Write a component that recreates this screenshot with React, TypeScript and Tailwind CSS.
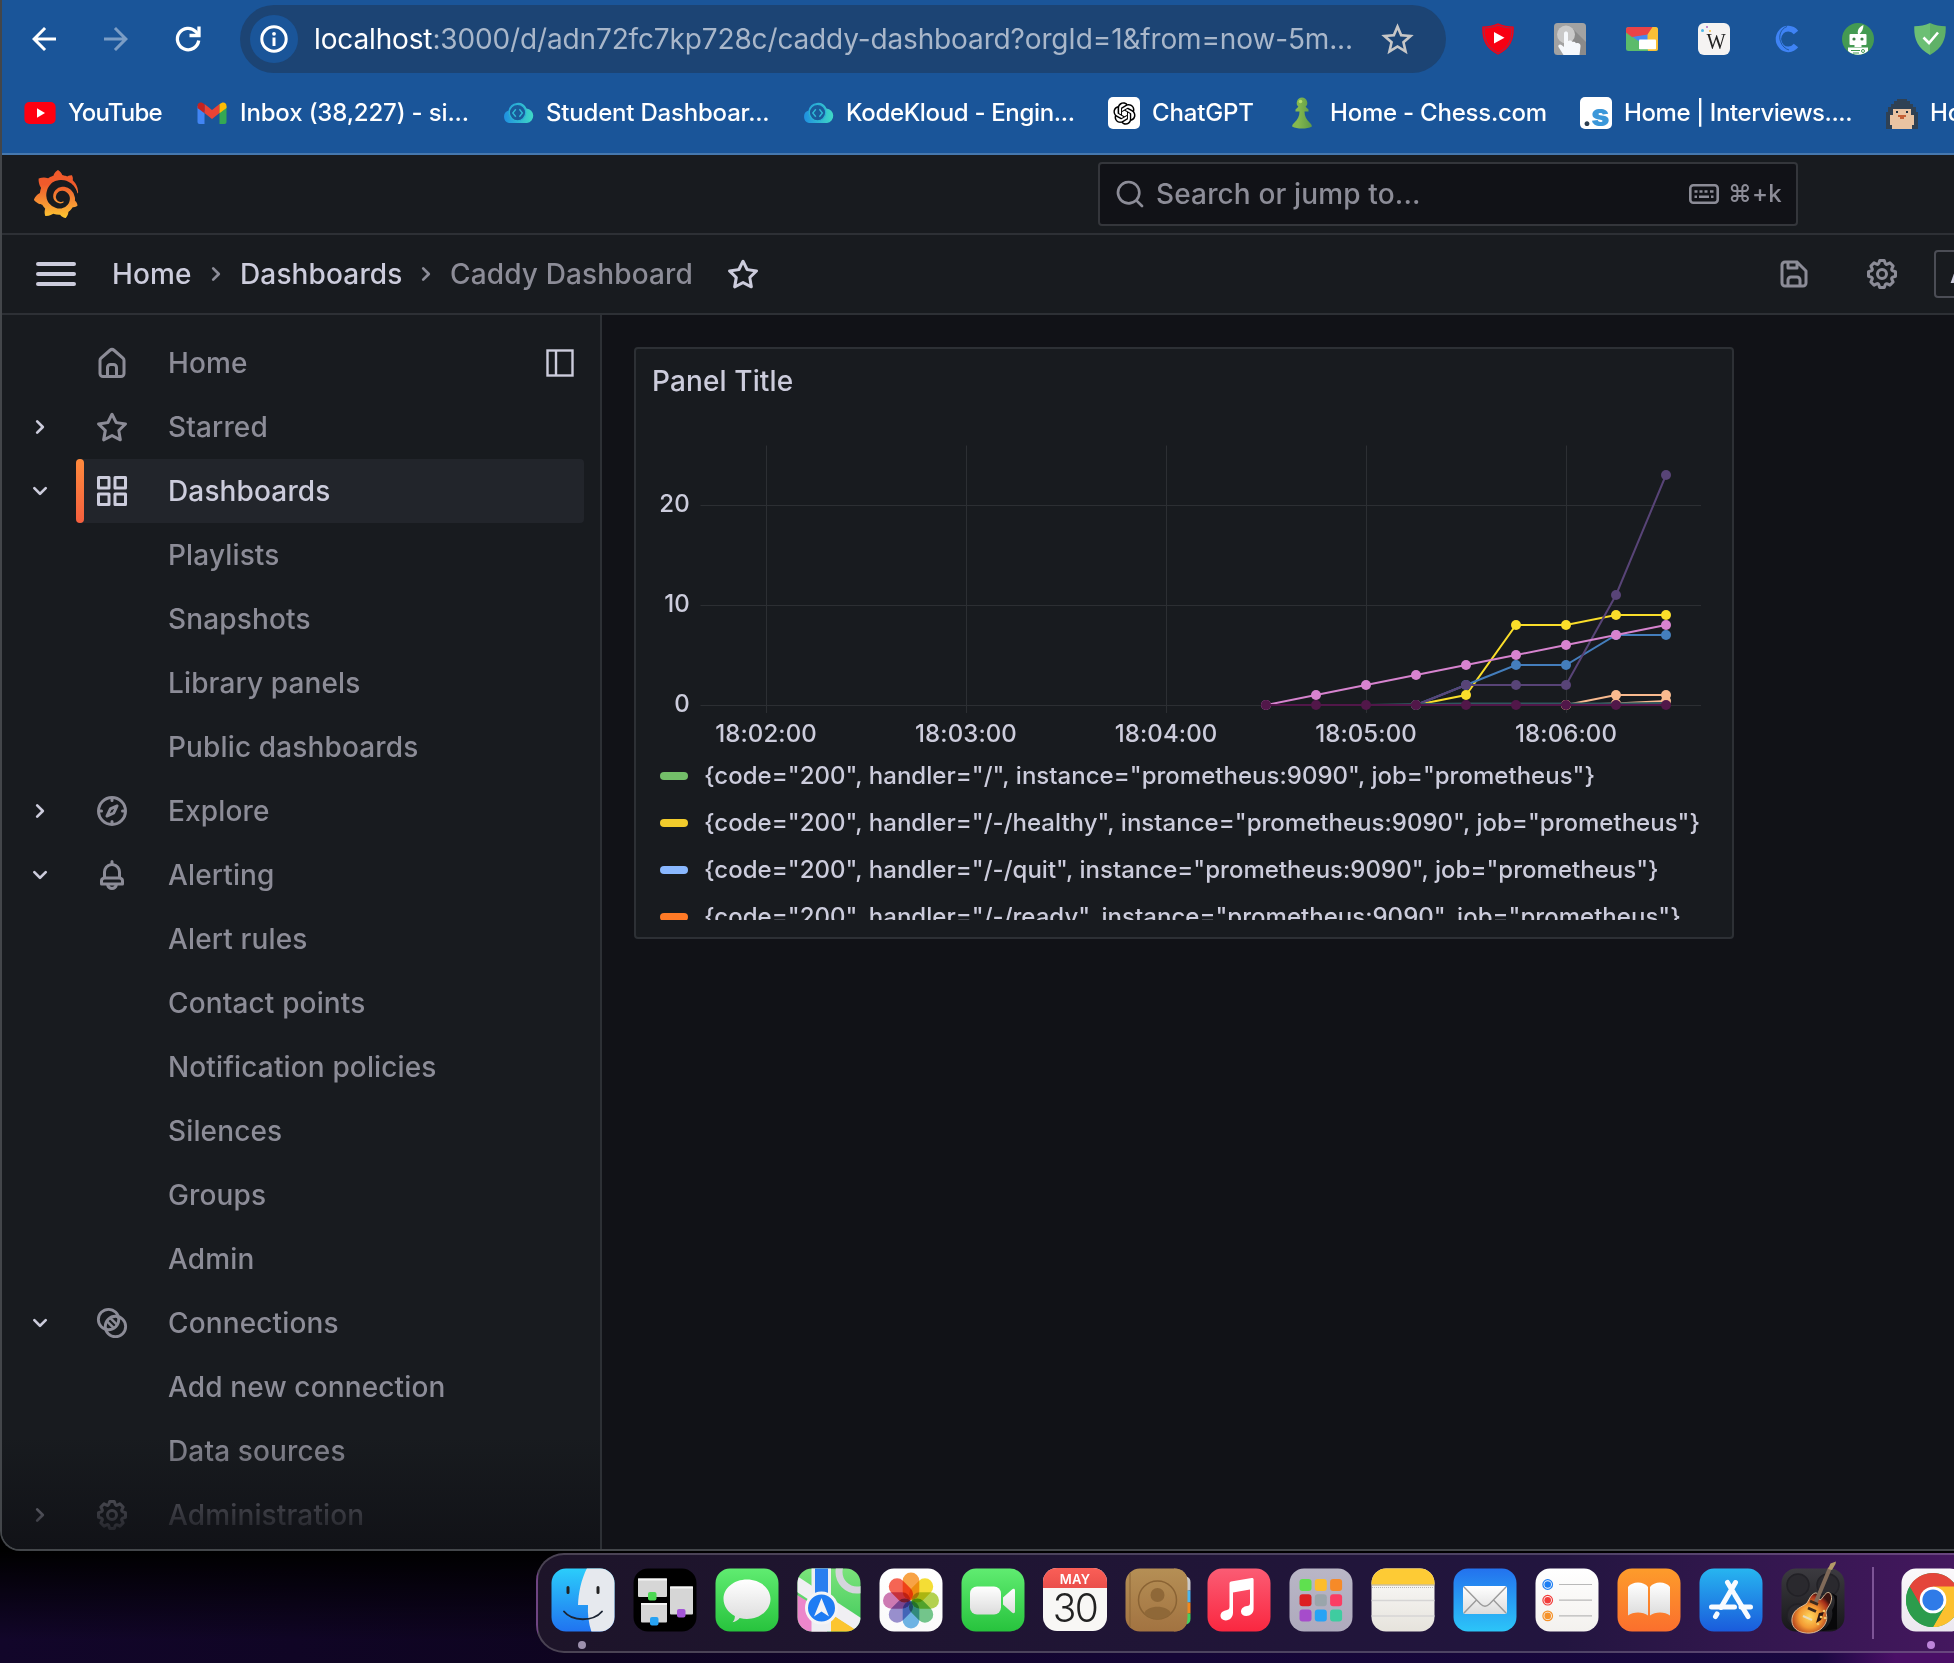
import React from "react";
import { MdArrowBack, MdArrowForward, MdStarBorder } from "react-icons/md";
import { SiGrafana } from "react-icons/si";
import { RiOpenaiFill } from "react-icons/ri";

const ICONS = {
  right:
    "M14.83,11.29,10.59,7.05a1,1,0,0,0-1.42,0,1,1,0,0,0,0,1.41L12.71,12,9.17,15.54a1,1,0,0,0,0,1.41,1,1,0,0,0,.71.29,1,1,0,0,0,.71-.29l4.24-4.24A1,1,0,0,0,14.83,11.29Z",
  down: "M17,9.17a1,1,0,0,0-1.41,0L12,12.71,8.46,9.17a1,1,0,0,0-1.41,0,1,1,0,0,0,0,1.42l4.24,4.24a1,1,0,0,0,1.42,0L17,10.59A1,1,0,0,0,17,9.17Z",
  home: "M20,8h0L14,2.74a3,3,0,0,0-4,0L4,8a3,3,0,0,0-1,2.26V19a3,3,0,0,0,3,3H18a3,3,0,0,0,3-3V10.25A3,3,0,0,0,20,8ZM14,20H10V15a1,1,0,0,1,1-1h2a1,1,0,0,1,1,1Zm5-1a1,1,0,0,1-1,1H16V15a3,3,0,0,0-3-3H11a3,3,0,0,0-3,3v5H6a1,1,0,0,1-1-1V10.25a1,1,0,0,1,.34-.75l6-5.25a1,1,0,0,1,1.32,0l6,5.25a1,1,0,0,1,.34.75Z",
  star: "M22,9.67A1,1,0,0,0,21.14,9l-5.69-.83L12.9,3a1,1,0,0,0-1.8,0L8.55,8.16,2.86,9a1,1,0,0,0-.81.68,1,1,0,0,0,.25,1l4.13,4-1,5.68A1,1,0,0,0,6.9,21.44L12,18.77l5.1,2.67a.93.93,0,0,0,.46.12,1,1,0,0,0,.59-.19,1,1,0,0,0,.4-1l-1-5.68,4.13-4A1,1,0,0,0,22,9.67Zm-6.15,4a1,1,0,0,0-.29.88l.72,4.2-3.76-2a1.06,1.06,0,0,0-.94,0l-3.76,2,.72-4.2a1,1,0,0,0-.29-.88l-3-3,4.21-.61a1,1,0,0,0,.76-.55L12,5.7l1.88,3.82a1,1,0,0,0,.76.55l4.21.61Z",
  apps: "M10,13H3a1,1,0,0,0-1,1v7a1,1,0,0,0,1,1h7a1,1,0,0,0,1-1V14A1,1,0,0,0,10,13ZM9,20H4V15H9ZM21,2H14a1,1,0,0,0-1,1v7a1,1,0,0,0,1,1h7a1,1,0,0,0,1-1V3A1,1,0,0,0,21,2ZM20,9H15V4h5Zm1,4H14a1,1,0,0,0-1,1v7a1,1,0,0,0,1,1h7a1,1,0,0,0,1-1V14A1,1,0,0,0,21,13Zm-1,7H15V15h5ZM10,2H3A1,1,0,0,0,2,3v7a1,1,0,0,0,1,1h7a1,1,0,0,0,1-1V3A1,1,0,0,0,10,2ZM9,9H4V4H9Z",
  bell: "M18,13.18V10a6,6,0,0,0-5-5.91V3a1,1,0,0,0-2,0V4.09A6,6,0,0,0,6,10v3.18A3,3,0,0,0,4,16v2a1,1,0,0,0,1,1H8.14a4,4,0,0,0,7.72,0H19a1,1,0,0,0,1-1V16A3,3,0,0,0,18,13.18ZM8,10a4,4,0,0,1,8,0v3H8Zm4,10a2,2,0,0,1-1.72-1h3.44A2,2,0,0,1,12,20Zm6-3H6V16a1,1,0,0,1,1-1H17a1,1,0,0,1,1,1Z",
  cog: "M21.32,9.55l-1.89-.63.89-1.78A1,1,0,0,0,20.13,6L18,3.87a1,1,0,0,0-1.15-.19l-1.78.89-.63-1.89A1,1,0,0,0,13.5,2h-3a1,1,0,0,0-.95.68L8.92,4.57,7.14,3.68A1,1,0,0,0,6,3.87L3.87,6a1,1,0,0,0-.19,1.15l.89,1.78-1.89.63A1,1,0,0,0,2,10.5v3a1,1,0,0,0,.68.95l1.89.63-.89,1.78A1,1,0,0,0,3.87,18L6,20.13a1,1,0,0,0,1.15.19l1.78-.89.63,1.89a1,1,0,0,0,.95.68h3a1,1,0,0,0,.95-.68l.63-1.89,1.78.89A1,1,0,0,0,18,20.13L20.13,18a1,1,0,0,0,.19-1.15l-.89-1.78,1.89-.63A1,1,0,0,0,22,13.5v-3A1,1,0,0,0,21.32,9.55ZM20,12.78l-1.2.4A2,2,0,0,0,17.64,16l.57,1.14-1.1,1.1L16,17.64a2,2,0,0,0-2.79,1.16l-.4,1.2H11.22l-.4-1.2A2,2,0,0,0,8,17.64l-1.14.57-1.1-1.1L6.36,16A2,2,0,0,0,5.2,13.18L4,12.78V11.22l1.2-.4A2,2,0,0,0,6.36,8L5.79,6.89l1.1-1.1L8,6.36A2,2,0,0,0,10.82,5.2l.4-1.2h1.56l.4,1.2A2,2,0,0,0,16,6.36l1.14-.57,1.1,1.1L17.64,8a2,2,0,0,0,1.16,2.79l1.2.4ZM12,8a4,4,0,1,0,4,4A4,4,0,0,0,12,8Zm0,6a2,2,0,1,1,2-2A2,2,0,0,1,12,14Z",
  save: "M20.71,9.29l-6-6a1,1,0,0,0-.32-.21A1.09,1.09,0,0,0,14,3H6A3,3,0,0,0,3,6V18a3,3,0,0,0,3,3H18a3,3,0,0,0,3-3V10A1,1,0,0,0,20.71,9.29ZM9,5h4V7H9Zm6,14H9V16a1,1,0,0,1,1-1h4a1,1,0,0,1,1,1Zm4-1a1,1,0,0,1-1,1H17V16a3,3,0,0,0-3-3H10a3,3,0,0,0-3,3v3H6a1,1,0,0,1-1-1V6A1,1,0,0,1,6,5H7V8A1,1,0,0,0,8,9h6a1,1,0,0,0,1-1V6.41l4,4Z",
  search:
    "M21.71,20.29,18,16.61A9,9,0,1,0,16.61,18l3.68,3.68a1,1,0,0,0,1.42,0A1,1,0,0,0,21.71,20.29ZM11,18a7,7,0,1,1,7-7A7,7,0,0,1,11,18Z",
  bars: "M3,8H21a1,1,0,0,0,0-2H3A1,1,0,0,0,3,8Zm18,8H3a1,1,0,0,0,0,2H21a1,1,0,0,0,0-2Zm0-5H3a1,1,0,0,0,0,2H21a1,1,0,0,0,0-2Z",
};

function Icon({ d, className = "size-9" }: { d: string; className?: string }) {
  return (
    <svg viewBox="0 0 24 24" fill="currentColor" className={`shrink-0 ${className}`}>
      <path d={d} />
    </svg>
  );
}

function CompassIcon() {
  return (
    <svg viewBox="0 0 24 24" className="size-9 shrink-0" fill="none" stroke="currentColor" strokeWidth="2" strokeLinecap="round" strokeLinejoin="round">
      <circle cx="12" cy="12" r="9" />
      <path d="M12 4v1M12 19v1M4 12h1M19 12h1" />
      <path strokeWidth="1.9" d="M15.4 8.6 10.9 10.6 8.6 15.4 13.2 13.3Z" />
    </svg>
  );
}

function ConnectionsIcon() {
  return (
    <svg viewBox="0 0 24 24" className="size-9 shrink-0" fill="none" stroke="currentColor" strokeWidth="1.9" strokeLinecap="round">
      <circle cx="9.7" cy="9.7" r="6.8" />
      <circle cx="14.3" cy="14.3" r="6.8" />
      <path strokeWidth="1.7" d="M11.4 9.2 15 12.8M9.2 11.4 12.8 15" />
    </svg>
  );
}

/* ---------- Browser chrome ---------- */

function YouTubeIcon() {
  return (
    <svg viewBox="0 0 32 32" className="size-8">
      <rect x="0.4" y="5" width="31.2" height="22" rx="5" fill="#ff0010" />
      <path d="M13 11.3v9.4l8-4.7z" fill="#fff" />
    </svg>
  );
}

function GmailIcon() {
  return (
    <svg viewBox="0 0 32 32" className="size-8">
      <path d="M1.5 9v16a2 2 0 0 0 2 2h5V14z" fill="#4285f4" />
      <path d="M30.500 9v16a2 2 0 0 1-2 2h-5V14z" fill="#34a853" />
      <path d="M8.500 7 16 13l7.500-6v9L16 22l-7.500-6z" fill="#ea4335" />
      <path d="M23.500 7.200C27 4 30.500 5.500 30.500 9v2l-7 5.200z" fill="#fbbc04" />
      <path d="M8.500 7.200C5 4 1.500 5.500 1.500 9v2l7 5.200z" fill="#c5221f" />
    </svg>
  );
}

function KodeIcon() {
  return (
    <svg viewBox="0 0 32 32" className="size-8">
      <defs>
        <linearGradient id="kode" x1="0" x2="1">
          <stop offset="0" stopColor="#1f8fe0" />
          <stop offset="1" stopColor="#3fd9c6" />
        </linearGradient>
      </defs>
      <path d="M7 26a6.500 6.500 0 0 1-.5-12.500A9.500 9.500 0 0 1 24.500 11.500 7.300 7.300 0 0 1 25 26z" fill="url(#kode)" />
      <circle cx="15.500" cy="15.600" r="8.200" fill="#1a5a9a" stroke="#2bb3d6" strokeWidth="1.200" />
      <path d="m13.800 12.200-3 3.800 3 3.800M17.400 12.200l3 3.800-3 3.800" fill="none" stroke="#2fb9d6" strokeWidth="1.400" />
    </svg>
  );
}

function GptIcon() {
  return (
    <span className="flex size-8 items-center justify-center rounded-[5px] bg-white">
      <RiOpenaiFill className="size-[27px] text-black" />
    </span>
  );
}

function PawnIcon() {
  return (
    <svg viewBox="0 0 32 32" className="size-8">
      <defs>
        <linearGradient id="pawn" x1="0" x2="1">
          <stop offset="0.3" stopColor="#85b94e" />
          <stop offset="1" stopColor="#5d9948" />
        </linearGradient>
      </defs>
      <path
        d="M16 .5a5.400 5.400 0 0 0-3.600 9.300L9.500 12.500v2h4c0 5-2 8-5 11-2 1.800-2.400 3.200-2.400 4 2.600 1.600 6 2 9.900 2s7.300-.4 9.900-2c0-.8-.4-2.200-2.400-4-3-3-5-6-5-11h4v-2l-2.900-2.700A5.400 5.400 0 0 0 16 .5z"
        fill="url(#pawn)"
      />
      <circle cx="14.500" cy="4.500" r="1.800" fill="#b5dc6c" />
    </svg>
  );
}

function InterviewsIcon() {
  return (
    <span className="flex size-8 items-end justify-center rounded-[5px] bg-white pb-[3px] font-black leading-none">
      <span className="text-[24px] leading-[16px] text-[#2c3e50]">.</span>
      <span className="text-[31px] leading-[22px] text-[#3b97d9]">s</span>
    </span>
  );
}

function PenguinIcon() {
  return (
    <svg viewBox="0 0 32 32" className="size-8" shapeRendering="crispEdges">
      <path d="M11 2h10v2h3v3h3v3h3v5h2v17H0V15h2v-5h3V7h3V4h3z" fill="#2f4154" />
      <path d="M7 12h18v6h3v10h-2v4H6v-4H4V18h3z" fill="#e9c3a2" />
      <path d="M10 14h2v2h-2zM20 14h2v2h-2z" fill="#22303f" />
      <path d="M12 18h8v2h-2v2h-4v-2h-2z" fill="#c55f35" />
    </svg>
  );
}

const BOOKMARKS = [
  { icon: <YouTubeIcon />, text: "YouTube", cls: "w-[172px]", t: "tracking-[-0.85px]" },
  { icon: <GmailIcon />, text: "Inbox (38,227) - si...", cls: "w-[306px]", t: "tracking-[-0.15px]" },
  { icon: <KodeIcon />, text: "Student Dashboar...", cls: "w-[300px]", t: "tracking-[-0.2px]" },
  { icon: <KodeIcon />, text: "KodeKloud - Engin...", cls: "w-[306px]", t: "tracking-[-0.33px]" },
  { icon: <GptIcon />, text: "ChatGPT", cls: "w-[178px]", t: "tracking-[-0.17px]" },
  { icon: <PawnIcon />, text: "Home - Chess.com", cls: "w-[294px]", t: "tracking-[-0.23px]" },
  { icon: <InterviewsIcon />, text: "Home | Interviews....", cls: "w-[306px]", t: "tracking-[-0.43px]" },
  { icon: <PenguinIcon />, text: "Home", cls: "w-[160px]", t: "tracking-[-0.2px]" },
];

function ExtensionIcons() {
  return (
    <div className="flex shrink-0 items-center gap-10">
      <svg viewBox="0 0 32 32" className="size-8">
        <path d="M16 .3C21 2.500 26 3.500 31.700 3.500c.5 12-2.500 21.500-15.700 28.200C2.800 25-.2 15.500.3 3.500 6 3.500 11 2.500 16 .3z" fill="#f80012" />
        <path d="M16 2.200c4.500 1.800 9 2.800 13.800 2.800.3 10.500-2.200 18.500-13.800 25C4.400 23.500 1.900 15.500 2.200 5c4.800 0 9.300-1 13.800-2.800z" fill="none" stroke="#8a3458" strokeWidth="0.900" />
        <path d="M12 9v11.500l10.500-5.700z" fill="#fff" />
      </svg>
      <svg viewBox="0 0 32 32" className="size-8">
        <rect width="32" height="32" rx="3.500" fill="#a2a2a2" />
        <path d="M18 5 32 19v13H20z" fill="#8a8a8a" />
        <circle cx="12" cy="11.500" r="9" fill="#c9c9c9" />
        <path d="M10 10.500c0-2.600 4-2.600 4 0V18l1-.3c1.500-.6 3 0 3.300 1.300 1.600-.8 3.200-.2 3.700 1.300 2.500-.8 5 .5 4.500 3.200L25.500 32H9.500L4.500 24c-1-2 1.500-3.500 3-2l2.500 2z" fill="#f5f8fc" />
      </svg>
      <svg viewBox="0 0 32 32" className="size-8">
        <rect x="0" y="4" width="32" height="24" rx="2.500" fill="#5bbb6b" />
        <path d="M26 4h3.500A2.500 2.500 0 0 1 32 6.500v19a2.500 2.500 0 0 1-2.500 2.500H22l-2-17z" fill="#f9bf36" />
        <path d="M6 13.500 21.500 11v8H14z" fill="#4688f1" />
        <path d="M2.500 4H26.500L21.500 11.500 6 14 0 9.500v-3A2.500 2.500 0 0 1 2.500 4z" fill="#ea4347" />
        <rect x="13" y="16.500" width="17" height="9.800" rx="0.800" fill="#fff" />
      </svg>
      <span className="relative flex size-8 items-center justify-center rounded-[6px] bg-[#f5f3f2] pt-1 font-['Liberation_Serif'] text-[24px] leading-none text-[#222]">
        <span className="scale-x-[.85] pl-1">W</span>
        <span className="absolute left-[3px] top-[6px] size-[3px] rounded-full bg-[#4db8e8]" />
        <span className="absolute left-[8px] top-[3px] size-[2px] rounded-full bg-[#b06ac0]" />
        <span className="absolute left-[11px] top-[7px] size-[2px] rounded-full bg-[#f2c14a]" />
      </span>
      <svg viewBox="0 0 32 32" className="size-8">
        <path d="M26 9.500C22 4.500 15 4.500 11.500 8.500c-4 4.500-4 10.500 0 15C15 27.500 22 27.500 26 22.500" fill="none" stroke="#3f83f5" strokeWidth="5.600" />
        <path d="M17 3.500C10.500 6 8.500 13 10.500 18.500c1.500 4.500 5 7.500 8.500 8.500" fill="none" stroke="#1a5599" strokeWidth="0.900" />
      </svg>
      <svg viewBox="0 0 32 32" className="size-8">
        <circle cx="16" cy="16" r="16" fill="#449a52" />
        <path d="M16 11c-1-4 1-7 5.500-9-.2 4-1.500 7-4 9z" fill="#fff" />
        <rect x="7.500" y="11" width="17" height="11" rx="1" fill="#fff" />
        <circle cx="12" cy="16" r="1.600" fill="#3d7f47" />
        <circle cx="20" cy="16" r="1.600" fill="#3d7f47" />
        <rect x="12.500" y="22" width="7" height="2" fill="#fff" />
        <path d="M6 24.500h20v3.500c-6 5-14 5-20 0z" fill="#fff" />
        <path d="M9 27.500h9M11 30h6" stroke="#449a52" strokeWidth="1" />
        <circle cx="21" cy="28" r="1.500" fill="none" stroke="#449a52" />
      </svg>
      <svg viewBox="0 0 32 32" className="size-8">
        <path d="M16 0C21 2.200 26 3.200 31.700 3.200c.5 12-2.500 21.500-15.700 28.800z" fill="#5fb167" />
        <path d="M16 0C11 2.200 6 3.200.3 3.200-.2 15.200 2.800 24.700 16 32z" fill="#6cbf74" />
        <path d="m9.500 14.500 5.500 5.500 9-10.500" fill="none" stroke="#fff" strokeWidth="2.600" />
      </svg>
    </div>
  );
}

function BrowserChrome() {
  return (
    <header className="flex h-[155px] shrink-0 flex-col border-b-2 border-[#4678ae] bg-[#1a5599] text-white">
      <div className="flex h-[78px] shrink-0 items-center pl-6">
        <MdArrowBack className="size-9 shrink-0" />
        <MdArrowForward className="ml-9 size-9 shrink-0 text-[#7b9dc5]" />
        <svg viewBox="0 0 36 36" className="ml-9 size-9 shrink-0" fill="none" stroke="currentColor" strokeWidth="3.300">
          <path d="M28.700 19.500A10.700 10.700 0 1 1 25.800 10.600L28.500 13.500" />
          <path d="M29 5.500V14.500H19.500" />
        </svg>
        <div className="ml-[34px] flex h-[68px] w-[1206px] shrink-0 items-center rounded-full bg-[#1c4474] pl-[10px]">
          <span className="flex size-12 shrink-0 items-center justify-center rounded-full bg-[#1a5599]">
            <svg viewBox="0 0 28 28" className="size-7" fill="none" stroke="#fff">
              <circle cx="14" cy="14" r="12.200" strokeWidth="3" />
              <path d="M14 12.500v8.500" strokeWidth="3" />
              <circle cx="14" cy="8.800" r="1.900" fill="#fff" stroke="none" />
            </svg>
          </span>
          <span className="ml-[16px] w-[1054px] shrink-0 whitespace-nowrap text-[28px] leading-none tracking-[-0.14px] text-[#a9b7ca]">
            <span className="text-white">localhost</span>
            :3000/d/adn72fc7kp728c/caddy-dashboard?orgId=1&amp;from=now-5m...
          </span>
          <MdStarBorder className="ml-[10px] size-[39px] shrink-0 text-[#c7c7c7]" />
        </div>
        <div className="ml-9">
          <ExtensionIcons />
        </div>
      </div>
      <div className="flex h-[70px] shrink-0 items-center overflow-hidden pl-[22px]">
        {BOOKMARKS.map((b, i) => (
          <div key={i} className={`flex shrink-0 items-center gap-3 ${b.cls}`}>
            {b.icon}
            <span className={`whitespace-nowrap text-[24px] font-medium leading-none ${b.t}`}>{b.text}</span>
          </div>
        ))}
      </div>
    </header>
  );
}

/* ---------- Grafana ---------- */

function TopBar() {
  return (
    <div className="flex h-20 shrink-0 items-center border-b-2 border-[#2d3035] bg-[#181b1f]">
      <svg className="size-0">
        <defs>
          <linearGradient id="grafana" gradientUnits="userSpaceOnUse" x1="12" y1="24" x2="12" y2="3">
            <stop offset="0" stopColor="#fcc82f" />
            <stop offset="0.3" stopColor="#f89a34" />
            <stop offset="0.8" stopColor="#f05a2b" />
          </linearGradient>
        </defs>
      </svg>
      <SiGrafana fill="url(#grafana)" className="ml-[30px] size-12 shrink-0" />
      <div className="ml-[1018px] flex h-16 w-[700px] shrink-0 items-center rounded-[4px] border-2 border-[#34363b] bg-[#111217] pl-[14px] pr-[14px] text-[#8c8c97]">
        <Icon d={ICONS.search} className="size-8" />
        <span className="ml-[10px] text-[28px] leading-none">Search or jump to...</span>
        <svg viewBox="0 0 30 20" className="ml-auto h-5 w-[30px]">
          <rect x="1.300" y="1.300" width="27.400" height="17.400" rx="3" fill="none" stroke="currentColor" strokeWidth="2.600" />
          <path d="M5.500 7.500h3M10.500 7.500h3M15.500 7.500h3M21 7.500h3.500M5.500 12.800h2.500M10 12.800h10M22 12.800h2.500" stroke="currentColor" strokeWidth="2.600" />
        </svg>
        <span className="ml-[9px] text-[24px] leading-none tracking-[0.3px]">⌘+k</span>
      </div>
    </div>
  );
}

function BreadcrumbBar() {
  return (
    <div className="flex h-20 shrink-0 items-center border-b-2 border-[#2d3035] bg-[#181b1f] text-[28px] leading-none text-[#ccccdc]">
      <Icon d={ICONS.bars} className="ml-[30px] size-12" />
      <span className="ml-8 w-[88px] shrink-0">Home</span>
      <Icon d={ICONS.right} className="size-8 text-[#8c8c97]" />
      <span className="ml-2 w-[170px] shrink-0">Dashboards</span>
      <Icon d={ICONS.right} className="size-8 text-[#8c8c97]" />
      <span className="ml-2 w-[275px] shrink-0 whitespace-nowrap text-[#8c8c97]">Caddy Dashboard</span>
      <Icon d={ICONS.star} />
      <Icon d={ICONS.save} className="ml-[1015px] size-9 text-[#8c8c97]" />
      <Icon d={ICONS.cog} className="ml-[52px] size-9 text-[#8c8c97]" />
      <div className="ml-[34px] flex h-12 w-[120px] shrink-0 items-center rounded-[4px] border-2 border-[#4b4d55] pl-[14px] text-[26px] font-medium">
        Add
      </div>
    </div>
  );
}

type NavItem = { text: string; icon?: React.ReactNode; arrow?: "right" | "down"; active?: boolean };

const NAV: NavItem[] = [
  { text: "Home", icon: <Icon d={ICONS.home} /> },
  { text: "Starred", icon: <Icon d={ICONS.star} />, arrow: "right" },
  { text: "Dashboards", icon: <Icon d={ICONS.apps} />, arrow: "down", active: true },
  { text: "Playlists" },
  { text: "Snapshots" },
  { text: "Library panels" },
  { text: "Public dashboards" },
  { text: "Explore", icon: <CompassIcon />, arrow: "right" },
  { text: "Alerting", icon: <Icon d={ICONS.bell} />, arrow: "down" },
  { text: "Alert rules" },
  { text: "Contact points" },
  { text: "Notification policies" },
  { text: "Silences" },
  { text: "Groups" },
  { text: "Admin" },
  { text: "Connections", icon: <ConnectionsIcon />, arrow: "down" },
  { text: "Add new connection" },
  { text: "Data sources" },
  { text: "Administration", icon: <Icon d={ICONS.cog} />, arrow: "right" },
];

function Sidebar() {
  return (
    <nav className="relative w-[600px] shrink-0 border-r-2 border-[#2d3035] bg-[#181b1f] pt-4">
      {NAV.map((n) => (
        <div key={n.text} className="flex h-16 items-center">
          <div className="flex w-[74px] shrink-0 items-center pl-[22px] text-[#ccccdc]">
            {n.arrow && <Icon d={ICONS[n.arrow]} className="size-8" />}
          </div>
          <div
            className={
              n.active
                ? "flex h-full w-[508px] items-center rounded-[4px] bg-[#22252b] text-[#ccccdc]"
                : "flex h-full w-[508px] items-center text-[#8c8c97]"
            }
          >
            <div
              className={
                n.active ? "h-full w-2 rounded-[4px] bg-gradient-to-b from-[#ff8a3d] to-[#f55f3e]" : "w-2"
              }
            />
            <div className="ml-[10px] w-9 shrink-0">{n.icon}</div>
            <span className="ml-[38px] whitespace-nowrap text-[28px] leading-none">{n.text}</span>
            {n.text === "Home" && (
              <svg viewBox="0 0 28 28" className="ml-auto mr-[10px] size-7 text-[#ccccdc]" fill="none" stroke="currentColor" strokeWidth="2.400">
                <rect x="1.500" y="1.500" width="25" height="25" />
                <path d="M10 1.500v25" />
              </svg>
            )}
          </div>
        </div>
      ))}
      <div className="absolute inset-x-0 bottom-0 h-[112px] bg-gradient-to-b from-transparent to-[#111217]" />
    </nav>
  );
}

const X0 = 1266;
const series = [
  { color: "#fade2a", from: 3, v: [0, 1, 8, 8, 9, 9] },
  { color: "#447ebc", from: 3, v: [0, 2, 4, 4, 7, 7] },
  { color: "#584477", from: 3, v: [0, 2, 2, 2, 11, 23] },
  { color: "#d683ce", from: 0, v: [0, 1, 2, 3, 4, 5, 6, 7, 8] },
  { color: "#f9ba8f", from: 6, v: [0, 0.15, 0.4] },
  { color: "#f9ba8f", from: 6, v: [0, 1, 1] },
  { color: "#2f575e", from: 2, v: [0, 0.1, 0.15, 0.15, 0.15, 0.15, 0.2] },
  { color: "#511749", from: 0, v: [0, 0, 0, 0, 0, 0, 0, 0, 0] },
];
const px = (i: number) => X0 - 636 + i * 50;
const py = (v: number) => 705 - 425 - v * 10;

function Chart() {
  return (
    <svg viewBox="0 0 1096 330" className="h-[330px] w-[1096px] shrink-0">
      <g stroke="#2c2f33" strokeWidth="1">
        {[0, 1, 2, 3, 4].map((i) => (
          <path key={i} d={`M${130.5 + i * 200} 20.500V288`} />
        ))}
        {[0, 1, 2].map((i) => (
          <path key={i} d={`M64.500 ${80.5 + i * 100}H1065`} />
        ))}
      </g>
      {series.map((s, k) => (
        <g key={k}>
          <polyline points={s.v.map((v, i) => `${px(i + s.from)},${py(v)}`).join(" ")} fill="none" stroke={s.color} strokeWidth="2" />
          {s.color !== "#2f575e" &&
            s.v.map((v, i) => <circle key={i} cx={px(i + s.from)} cy={py(v)} r="5" fill={s.color} />)}
        </g>
      ))}
      <g fill="#ccccdc" fontSize="24" letterSpacing="0.1" fontFamily="Inter, sans-serif">
        {["20", "10", "0"].map((t, i) => (
          <text key={t} x="53.800" y={87 + i * 100} textAnchor="end">
            {t}
          </text>
        ))}
        {["18:02:00", "18:03:00", "18:04:00", "18:05:00", "18:06:00"].map((t, i) => (
          <text key={t} x={130 + i * 200} y="316.500" textAnchor="middle">
            {t}
          </text>
        ))}
      </g>
    </svg>
  );
}

const LEGEND = [
  { c: "bg-[#73bf69]", h: "/" },
  { c: "bg-[#f2cc2c]", h: "/-/healthy" },
  { c: "bg-[#8ab8ff]", h: "/-/quit" },
  { c: "bg-[#ff7a26]", h: "/-/ready" },
];

function Panel() {
  return (
    <section className="ml-8 mt-8 flex h-[592px] w-[1100px] flex-col rounded-[4px] border-2 border-[#2d3035] bg-[#181b1f]">
      <h2 className="flex h-[64px] shrink-0 items-center pl-4 text-[28px] font-[550] leading-none tracking-[0.12px] text-[#ccccdc]">
        Panel Title
      </h2>
      <div className="mt-[12px] flex h-[330px] shrink-0 items-start">
        <Chart />
      </div>
      <div className="-mt-[2px] flex h-[167px] flex-col overflow-hidden pl-6">
        {LEGEND.map((l) => (
          <div key={l.h} className="flex h-[46.800px] shrink-0 items-center gap-4 text-[24px] leading-none tracking-[0.02px] text-[#ccccdc]">
            <span className={`h-2 w-7 shrink-0 rounded-full ${l.c}`} />
            <span className="whitespace-nowrap">{`{code="200", handler="${l.h}", instance="prometheus:9090", job="prometheus"}`}</span>
          </div>
        ))}
      </div>
    </section>
  );
}

/* ---------- Dock ---------- */

function Tile({ id, from, to, children }: { id: string; from: string; to: string; children?: React.ReactNode }) {
  return (
    <svg viewBox="0 0 64 64" className="size-16 shrink-0 overflow-visible">
      <defs>
        <linearGradient id={`t-${id}`} x1="0" y1="0" x2="0" y2="1">
          <stop offset="0" stopColor={from} />
          <stop offset="1" stopColor={to} />
        </linearGradient>
        <clipPath id={`c-${id}`}>
          <rect x="0.500" y="0.500" width="63" height="63" rx="14.500" />
        </clipPath>
        <linearGradient id={`w-${id}`} x1="0" y1="0" x2="0" y2="1">
          <stop offset="0" stopColor="#ffffff" />
          <stop offset="1" stopColor="#dcdcdc" />
        </linearGradient>
      </defs>
      <rect x="0.500" y="0.500" width="63" height="63" rx="14.500" fill={`url(#t-${id})`} />
      {children}
    </svg>
  );
}

const PETALS = ["#f7962c", "#f3d919", "#a9cb38", "#5fbd7b", "#5aa9e0", "#8a7fc6", "#c667a8", "#f4503c"];
const LAUNCH = ["#5fe04f", "#fdbd2c", "#f68a28", "#dc1f22", "#9aa5ab", "#fb3d63", "#a64ccb", "#27a3f5", "#3fcca0"];

function Dock() {
  return (
    <div className="ml-[536px] mt-[2px] flex h-[100px] w-[1500px] items-start gap-[18px] rounded-[28px] border-2 border-white/20 bg-gradient-to-r from-[#1d1429] via-[#22153f] via-[68%] to-[#4b1765] pl-[13px] pt-[13px]">
      <div className="flex flex-col items-center gap-[9px]">
        <Tile id="finder" from="#2bcdfb" to="#2073f0">
          <g clipPath="url(#c-finder)">
            <path d="M36 0C30 12 27.500 25 27 37h10c-.5 9 .5 18 3.500 27H64V0z" fill="#e6e9ee" />
          </g>
          <path d="M17 19.500v5M47 19.500v5" stroke="#222" strokeWidth="3" strokeLinecap="round" />
          <path d="M13 43.500c8 10 29 10.500 38 0" fill="none" stroke="#1b2433" strokeWidth="1.900" strokeLinecap="round" />
        </Tile>
        <span className="-ml-[2px] size-2 rounded-full bg-[#9d90ad]" />
      </div>
      <Tile id="stage" from="#000" to="#000">
        <g fill="#d6d6d6">
          <rect x="5" y="10.500" width="29" height="18.500" rx="1" />
          <rect x="37" y="18.500" width="23" height="28" rx="1" />
          <rect x="8" y="35" width="26" height="19.500" rx="1" />
        </g>
        <path d="M5 11.500h29M37 19.500h23M8 36h26" stroke="#f5f5f5" strokeWidth="2" />
        <rect x="15" y="24" width="8.500" height="8.500" rx="2" fill="#4cd852" />
        <rect x="44" y="41" width="8.500" height="8.500" rx="2" fill="#a455d8" />
        <rect x="17" y="49" width="8.500" height="8.500" rx="2" fill="#27a2f3" />
      </Tile>
      <Tile id="msg" from="#60ec71" to="#27c33d">
        <path d="M32 11.500c13 0 23.500 8.500 23.500 19.500S45 51 32 51c-2.500 0-5-.3-7.300-1-1.500 2-4.500 4-7.200 4.200 1.700-1.800 2.500-4 2.300-6.200C13 44.500 8.500 38 8.500 31 8.500 20 19 11.500 32 11.500z" fill="url(#w-msg)" />
      </Tile>
      <Tile id="maps" from="#7be37b" to="#3fc95a">
        <g clipPath="url(#c-maps)">
          <path d="M0 27 30 45V64H0z" fill="#ec86cb" />
          <path d="M0 8 64 50v16L0 24z" fill="#f0eff3" />
          <circle cx="60" cy="4" r="18" fill="none" stroke="#d5d5dc" strokeWidth="7" />
          <path d="M14.500 0h19.500v64H14.500z" fill="#eeeef2" />
          <path d="M18 0h13v30H18z" fill="#2a7ff0" />
          <path d="M34 46 62 64H34z" fill="#fcc52f" />
        </g>
        <circle cx="24.500" cy="40" r="15" fill="#1f7cf3" stroke="#f4f4f6" strokeWidth="3" />
        <path d="m24.500 30 7.500 18.500-7.500-5-7.500 5z" fill="#f3f3f6" />
      </Tile>
      <Tile id="photos" from="#fff" to="#fafafa">
        <g className="isolate">
          {PETALS.map((c, i) => (
            <rect key={c} x="23.700" y="4.500" width="16.600" height="27.500" rx="8.300" fill={c} opacity="0.880" transform={`rotate(${i * 45} 32 32.500)`} className="mix-blend-multiply" />
          ))}
        </g>
      </Tile>
      <Tile id="face" from="#60ec71" to="#27c33d">
        <rect x="9" y="18.500" width="31" height="28" rx="7" fill="url(#w-face)" />
        <path d="M42 29.500 51 21.500c1.500-1.300 3-.6 3 1v21c0 1.600-1.500 2.300-3 1L42 36.500z" fill="url(#w-face)" />
      </Tile>
      <div className="flex h-[63px] w-16 shrink-0 flex-col overflow-hidden rounded-[14px] bg-[#f8f7f5]">
        <div className="flex h-[20px] shrink-0 items-center justify-center bg-gradient-to-b from-[#fa5f57] to-[#ea4f4b] pt-[2px] text-[13px] font-semibold leading-none tracking-[0.3px] text-white">
          MAY
        </div>
        <div className="flex h-[38px] items-center justify-center text-[39px] font-light leading-none tracking-[-1.600px] text-[#222]">30</div>
      </div>
      <Tile id="contacts" from="#b58f55" to="#a27341">
        <path d="M61.500 8.500c3 1 4 3 4 6v8h-4z" fill="#c9c9c9" />
        <path d="M61.500 22.500h4v12h-4z" fill="#4cb7ef" />
        <path d="M61.500 34.500h4v11h-4z" fill="#f2891f" />
        <path d="M61.500 45.500h4v5c0 3-1 5-4 6z" fill="#46d15d" />
        <path d="M49 .5c9 0 13.500 5 13.500 14.500v34c0 9.500-4.500 14.500-13.500 14.500z" fill="url(#t-contacts)" />
        <path d="M5 5v54" stroke="#8a6536" strokeWidth="1" />
        <circle cx="32.500" cy="32" r="19" fill="none" stroke="#8a6334" strokeWidth="1.500" />
        <circle cx="32.500" cy="27" r="7" fill="#8f6838" />
        <path d="M19 45.500c3-9 24-9 27 0-7 7.500-20 7.500-27 0z" fill="#8f6838" />
      </Tile>
      <Tile id="music" from="#fb5c74" to="#fa2740">
        <path d="M22.500 15.500c0-1 .6-1.700 1.600-1.900l20.500-3.500c1.200-.2 2 .3 2 1.500v29.500c0 4-3.200 7-7.300 7-3.200 0-5.300-1.700-5.300-4.500 0-3.400 2.700-5.200 6-5.700 2-.3 3-1 3-3V21.500l-17 3v20.200c0 4.300-3.200 7.700-7.300 7.700-3 0-5.200-1.900-5.200-4.600 0-3.300 2.500-5 5.800-5.600 2-.3 3.200-1.200 3.200-3.400z" fill="#fff" />
      </Tile>
      <Tile id="launch" from="#b9b6c6" to="#aeaabd">
        {LAUNCH.map((c, i) => (
          <rect key={c} x={10.500 + (i % 3) * 15.300} y={11 + Math.floor(i / 3) * 15.300} width="12" height="12" rx="3" fill={c} />
        ))}
      </Tile>
      <Tile id="notes" from="#fcfcfb" to="#e6e3dc">
        <g clipPath="url(#c-notes)">
          <rect width="64" height="16.500" fill="#fdcb35" />
          <path d="M0 17h64" stroke="#b5a371" strokeWidth="1" />
          <path d="M1 19.500h62" stroke="#b9b7b2" strokeWidth="1" strokeDasharray="1 1" />
          <path d="M0 32.500h64M0 48h64" stroke="#d6d5d5" strokeWidth="1.500" />
        </g>
      </Tile>
      <Tile id="mail" from="#2372ee" to="#2cc5f8">
        <rect x="10" y="18" width="44" height="28" rx="2.500" fill="url(#w-mail)" />
        <path d="m11 45 13-13.500M53 45 40 31.500M11 19l16.500 17c3 3 6 3 9 0L53 19" fill="none" stroke="#9b9b9b" strokeWidth="1.400" />
      </Tile>
      <Tile id="rem" from="#fff" to="#f3f1ee">
        {["#1c7ef3", "#f23d3b", "#f5922a"].map((c, i) => (
          <g key={c}>
            <circle cx="12.700" cy={16.500 + i * 15.700} r="4.800" fill="none" stroke={c} strokeWidth="1.200" />
            <circle cx="12.700" cy={16.500 + i * 15.700} r="3.300" fill={c} />
            <path d={`M24 ${16.500 + i * 15.700}h33`} stroke="#b9b9b9" strokeWidth="1.200" />
          </g>
        ))}
      </Tile>
      <Tile id="books" from="#fd9c2b" to="#fb6f2d">
        <path d="M11 19c4-6 16-6 20 0v28.500c-5-4-15-4-20 0zM33 19c4-6 16-6 20 0v28.500c-5-4-15-4-20 0z" fill="url(#w-books)" />
      </Tile>
      <Tile id="store" from="#27b5f0" to="#1a5bdc">
        <g stroke="#f8fbff" strokeWidth="5" strokeLinecap="round">
          <path d="M36.500 14.500 22 39.500M28.500 14.500l6 10M36 27l13 21.500" />
          <path d="M12.500 39h23M42 39h9.500" />
          <path d="m16.500 48.500 1.500-2.500" />
        </g>
      </Tile>
      <Tile id="band" from="#3c3b40" to="#17171a">
        <g fill="#2a292e" stroke="#222126" strokeWidth="1.500">
          <circle cx="17" cy="17" r="11" />
          <circle cx="47" cy="17" r="11" />
          <circle cx="17" cy="47" r="11" />
        </g>
        <defs>
          <radialGradient id="burst" cx="0.450" cy="0.600" r="0.600">
            <stop offset="0" stopColor="#ffd95e" />
            <stop offset="0.450" stopColor="#f39a33" />
            <stop offset="0.850" stopColor="#a42c18" />
            <stop offset="1" stopColor="#3b1410" />
          </radialGradient>
        </defs>
        <path d="M49 24c6 4 6 12 2 18 2 9-4 18-11 21l16-2V28z" fill="#08080a" />
        <path
          d="M34 25c-5 2-6 8-9 11-5 3-11 5-13.500 12-2 7 1 13 7 15.500 9 3.500 20 1.500 25-6.500 3.500-5.500 2-9 1.500-13 1-5 5-7 5.500-13 .3-4-1.500-8-5-6-3 2-4 6-6.500 7-2.500-1-1-8-5-7z"
          fill="url(#burst)"
          stroke="#e3c8a0"
          strokeWidth="0.900"
        />
        <path d="M34 36 49 0" stroke="#806a59" strokeWidth="4" />
        <path d="m47 1 2.500-5.500 5.500-2-.5 2.500-3.500 6z" fill="#b39a68" />
        <path d="m29 33 8 3.500M27 40l8 3.500" stroke="#3c2a1c" strokeWidth="3" />
        <path d="m22 48 9 4" stroke="#e8dcb8" strokeWidth="2" />
        <path d="M38 45 35 55l5-3 3-8z" fill="#291411" />
        <g fill="#f0c869">
          <circle cx="43" cy="43" r="1.300" />
          <circle cx="40" cy="49" r="1.300" />
          <circle cx="44" cy="50" r="1.300" />
          <circle cx="37" cy="56" r="1.300" />
        </g>
      </Tile>
      <div className="-mt-px ml-[9px] h-[72px] w-[2px] shrink-0 bg-[#7d5496]" />
      <div className="ml-[9px] flex flex-col items-center gap-[9px]">
        <Tile id="chrome" from="#fbf9fb" to="#ebe7ef">
          <circle cx="32" cy="32" r="27" fill="#2c9c4c" />
          <path d="M32 32 8.600 18.500a27 27 0 0 1 46.800 0z" fill="#e4453a" />
          <path d="M32 18.500h23.400A27 27 0 0 1 32 59l11.700-20.200z" fill="#fcc02f" />
          <path d="M8.600 18.500 20.300 38.700 32 32V18.500z" fill="#e4453a" />
          <path d="M8.600 18.500A27 27 0 0 0 32 59l11.700-20.200L32 45.500 20.300 38.700z" fill="#2c9c4c" />
          <circle cx="32" cy="32" r="13.300" fill="#fff" />
          <circle cx="32" cy="32" r="10.600" fill="#2f7be8" />
        </Tile>
        <span className="-ml-[4px] size-2 rounded-full bg-[#bd85da]" />
      </div>
    </div>
  );
}

export default function App() {
  return (
    <div className="h-[1663px] w-[1954px] overflow-hidden bg-[linear-gradient(180deg,#000000_1551px,transparent_1640px),linear-gradient(90deg,#12062a_0%,#0e0420_30%,#150636_60%,#190840_93%,#4a0f66_97%)] font-['Inter',sans-serif]">
      <div className="flex h-[1551px] w-[1990px] flex-col overflow-hidden rounded-bl-[20px] border-b-2 border-l-2 border-[#43464a] bg-[#111217]">
        <BrowserChrome />
        <div className="flex min-h-0 flex-1 flex-col font-[450] tracking-[0.14px]">
          <TopBar />
          <BreadcrumbBar />
          <div className="flex min-h-0 flex-1">
            <Sidebar />
            <main className="flex-1 bg-[#111217]">
              <Panel />
            </main>
          </div>
        </div>
      </div>
      <Dock />
    </div>
  );
}
